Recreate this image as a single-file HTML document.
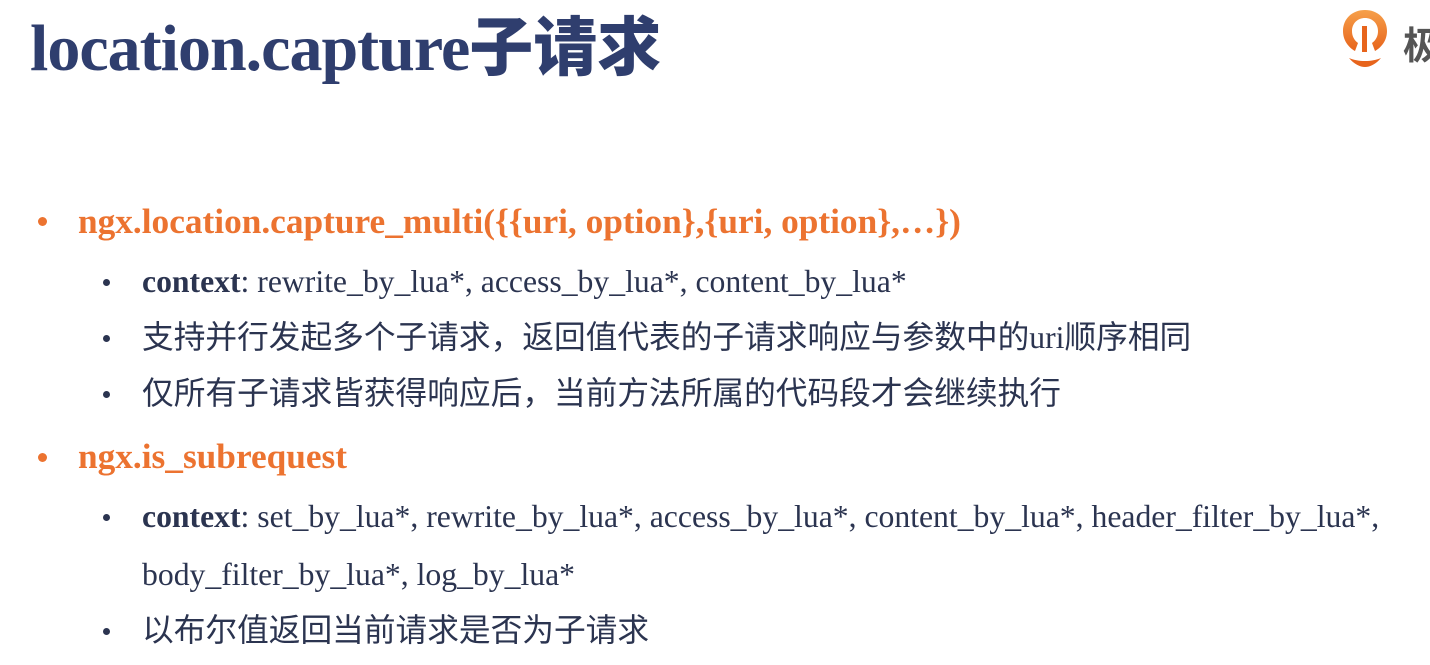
<!DOCTYPE html>
<html><head><meta charset="utf-8"><style>
body{margin:0;width:1430px;height:665px;background:#fff;overflow:hidden;position:relative;font-family:"Liberation Serif","Noto Serif CJK SC",serif;}
.t{position:absolute;left:30px;top:-2px;font-size:66px;font-weight:bold;color:#2f3e6e;line-height:90px;white-space:nowrap;letter-spacing:-1px}
.t span{font-family:"Noto Sans CJK SC",sans-serif;font-weight:900;font-size:64px;letter-spacing:0}
.l{position:absolute;white-space:nowrap;line-height:40px}
.o{left:78px;font-size:35.3px;font-weight:bold;color:#ec7330}
.s{left:142px;font-size:31.7px;color:#2b3450}
.s b{color:#2b3450}
.cj{font-family:"Liberation Serif","Noto Sans CJK SC",sans-serif}
.d1{position:absolute;left:38px;width:9px;height:9px;border-radius:50%;background:#ec7330}
.d2{position:absolute;left:103px;width:7px;height:7px;border-radius:50%;background:#2b3450}
</style></head><body>
<div class="t">location.capture<span>子请求</span></div>
<svg style="position:absolute;left:1341px;top:8px" width="56" height="62" viewBox="0 0 56 62">
<defs><linearGradient id="g" x1="0" y1="0" x2="0" y2="1"><stop offset="0" stop-color="#f6a04a"/><stop offset="1" stop-color="#e7641c"/></linearGradient></defs>
<path d="M24 2C11 2 2 11 2 23c0 9 5 16 12 20l3-8c-4-3-6-7-6-12 0-8 6-13 13-13s13 5 13 13c0 5-2 9-6 12l3 8c7-4 12-11 12-20C46 11 37 2 24 2z" fill="url(#g)"/>
<path d="M21 18h5v26h-5z" fill="#e7641c"/>
<path d="M8 50c5 6 11 9 16 9s11-3 16-9c-5 2-10 3-16 3s-11-1-16-3z" fill="#e7641c"/>
</svg>
<div style="position:absolute;left:1403px;top:18px;font-family:'Noto Sans CJK SC',sans-serif;font-size:38px;color:#555;font-weight:bold;line-height:50px">极</div>

<div class="d1" style="top:217px"></div>
<div class="l o" style="top:202px">ngx.location.capture_multi({{uri, option},{uri, option},…})</div>
<div class="d2" style="top:279px"></div>
<div class="l s" style="top:262px"><b>context</b>: rewrite_by_lua*, access_by_lua*, content_by_lua*</div>
<div class="d2" style="top:335px"></div>
<div class="l s cj" style="top:318px">支持并行发起多个子请求，返回值代表的子请求响应与参数中的uri顺序相同</div>
<div class="d2" style="top:391px"></div>
<div class="l s cj" style="top:374px">仅所有子请求皆获得响应后，当前方法所属的代码段才会继续执行</div>
<div class="d1" style="top:453px"></div>
<div class="l o" style="top:437px">ngx.is_subrequest</div>
<div class="d2" style="top:514px"></div>
<div class="l s" style="top:497px"><b>context</b>: set_by_lua*, rewrite_by_lua*, access_by_lua*, content_by_lua*, header_filter_by_lua*,</div>
<div class="l s" style="top:555px">body_filter_by_lua*, log_by_lua*</div>
<div class="d2" style="top:628px"></div>
<div class="l s cj" style="top:611px">以布尔值返回当前请求是否为子请求</div>
</body></html>
